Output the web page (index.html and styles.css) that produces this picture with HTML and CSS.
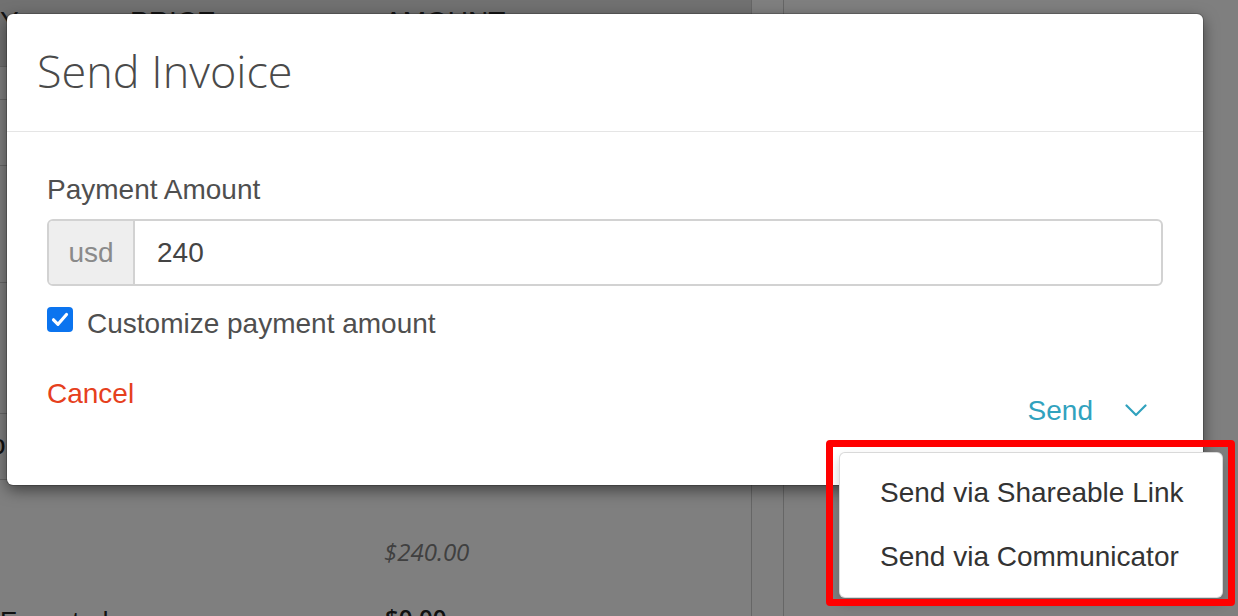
FILE: index.html
```html
<!DOCTYPE html>
<html>
<head>
<meta charset="utf-8">
<title>Send Invoice</title>
<link rel="stylesheet" href="styles.css">
</head>
<body>
<div class="page">
  <div class="col-main">
    <div class="row row-head">
      <span class="cell c1">Y</span><span class="cell c2">PRICE</span><span class="cell c3">AMOUNT</span>
    </div>
    <div class="row r2"></div>
    <div class="row r3"></div>
    <div class="row r4"></div>
    <div class="row r5"></div>
    <div class="row r6"><span class="cell c1 memo">o</span></div>
    <div class="row r7 plain">
      <span class="cell c1"></span><span class="cell c2"></span><span class="cell c3 total">$240.00</span>
    </div>
    <div class="row r8 plain">
      <span class="cell c1 expected">Expected</span><span class="cell c2"></span><span class="cell c3 due">$0.00</span>
    </div>
  </div>
  <div class="col-narrow"></div>
  <div class="col-side"></div>
</div>

<div class="backdrop"></div>

<div class="modal">
  <div class="modal-header">
    <h2 class="modal-title">Send Invoice</h2>
  </div>
  <div class="modal-body">
    <p class="field-label">Payment Amount</p>
    <div class="input-group">
      <span class="addon">usd</span>
      <span class="input-value">240</span>
    </div>
    <div class="check-row">
      <span class="checkbox">
        <svg width="26" height="25" viewBox="0 0 26 25"><path d="M6.5 12.8 L11 17.3 L19.5 7.5" fill="none" stroke="#fff" stroke-width="3.2" stroke-linecap="round" stroke-linejoin="round"/></svg>
      </span>
      <span class="check-label">Customize payment amount</span>
    </div>
    <div class="footer">
      <span class="cancel">Cancel</span>
      <span class="send">
        <span>Send</span>
        <svg class="chevron" width="22" height="13" viewBox="0 0 22 13"><polyline points="1.5,1.5 11,11 20.5,1.5" fill="none" stroke="#31a2be" stroke-width="2.2" stroke-linecap="round" stroke-linejoin="round"/></svg>
      </span>
    </div>
  </div>
</div>

<div class="dropdown">
  <span class="dropdown-item">Send via Shareable Link</span>
  <span class="dropdown-item">Send via Communicator</span>
</div>

<div class="highlight"></div>
</body>
</html>
```

FILE: styles.css
```css
* { box-sizing: border-box; }

html, body {
  margin: 0;
  padding: 0;
}

body {
  width: 1238px;
  height: 616px;
  overflow: hidden;
  position: relative;
  background: #fff;
  font-family: "Liberation Sans", Arial, sans-serif;
}

/* ---------- background page ---------- */
.page {
  display: flex;
  height: 616px;
}

.col-main {
  width: 752px;
  border-right: 1px solid #cdcdcd;
}

.col-narrow {
  width: 32px;
  border-right: 1px solid #cdcdcd;
}

.col-side {
  flex: 1;
}

.row {
  display: flex;
  border-bottom: 1px solid #cdcdcd;
}

.row.plain { border-bottom: none; }

.row-head {
  height: 67px;
  padding-top: 5px;
  background: #e2e2e2;
  font-size: 28px;
  line-height: 33.6px;
  color: #2a2a2a;
  text-transform: uppercase;
}

.r2 { height: 33px; }
.r3 { height: 66px; }
.r4 { height: 117px; }
.r5 { height: 131px; }
.r6 {
  height: 66px;
  padding-top: 14px;
  font-size: 28px;
  line-height: 33.6px;
  color: #222;
}
.r7 {
  height: 124px;
  padding-top: 58px;
}
.r8 {
  height: 40px;
}

.cell { display: block; }
.c1 { width: 130px; }
.c2 { width: 254px; }
.c3 { flex: 1; }

.memo { margin-left: -10px; }

.total {
  font-family: "Open Sans", sans-serif;
  font-style: italic;
  font-size: 24px;
  line-height: 28.8px;
  color: #808080;
}

.expected {
  font-size: 26px;
  line-height: 31px;
  color: #222;
  padding-top: 2px;
}

.due {
  font-family: "Open Sans", sans-serif;
  font-weight: 600;
  font-size: 24px;
  line-height: 28.8px;
  color: #222;
  padding-left: 1px;
}

/* ---------- overlay ---------- */
.backdrop {
  position: absolute;
  inset: 0;
  background: rgba(0, 0, 0, 0.5);
}

/* ---------- modal ---------- */
.modal {
  position: absolute;
  left: 7px;
  top: 14px;
  width: 1196px;
  background: #fff;
  border-radius: 6px;
  box-shadow: 0 0 0 1px rgba(0, 0, 0, 0.18), 0 5px 15px rgba(0, 0, 0, 0.5);
}

.modal-header {
  padding: 31px 29px 33px 30px;
  border-bottom: 1px solid #e5e5e5;
}

.modal-title {
  margin: 0;
  font-family: "Open Sans", sans-serif;
  font-weight: 300;
  font-size: 45px;
  line-height: 52.8px;
  color: #4a4a4a;
}

.modal-body {
  padding: 41px 40px 57px;
  font-size: 28px;
  line-height: 33.6px;
  color: #4f4f4f;
}

.field-label {
  margin: 0 0 13px;
}

.input-group {
  display: flex;
  height: 67px;
  border: 2px solid #d2d2d2;
  border-radius: 6px;
  overflow: hidden;
}

.addon {
  flex: 0 0 86px;
  display: flex;
  align-items: center;
  justify-content: center;
  background: #eeeeee;
  border-right: 2px solid #d2d2d2;
  color: #8a8a8a;
}

.input-value {
  display: flex;
  align-items: center;
  padding-left: 22px;
  color: #444;
}

.check-row {
  display: flex;
  align-items: flex-start;
  gap: 14px;
  margin-top: 21px;
}

.checkbox {
  display: block;
  width: 26px;
  height: 25px;
  background: #0b74ef;
  border-radius: 4px;
}

.checkbox svg { display: block; }

.footer {
  display: flex;
  justify-content: space-between;
  align-items: flex-start;
  margin-top: 36px;
}

.cancel {
  color: #e6401d;
}

.send {
  display: flex;
  align-items: center;
  gap: 32px;
  margin-top: 17px;
  margin-right: 16px;
  color: #31a2be;
}

.chevron { display: block; }

/* ---------- dropdown ---------- */
.dropdown {
  position: absolute;
  left: 839px;
  top: 452px;
  width: 384px;
  padding: 8px 0;
  background: #fff;
  border: 1px solid rgba(0, 0, 0, 0.15);
  border-radius: 6px;
  box-shadow: 0 6px 12px rgba(0, 0, 0, 0.18);
}

.dropdown-item {
  display: block;
  padding: 15.2px 20px 15.2px 40px;
  font-size: 28px;
  line-height: 33.6px;
  color: #333;
  white-space: nowrap;
}

/* ---------- annotation ---------- */
.highlight {
  position: absolute;
  left: 826px;
  top: 440px;
  width: 409px;
  height: 166px;
  border: 7px solid #ff0000;
  border-radius: 4px;
}
```
